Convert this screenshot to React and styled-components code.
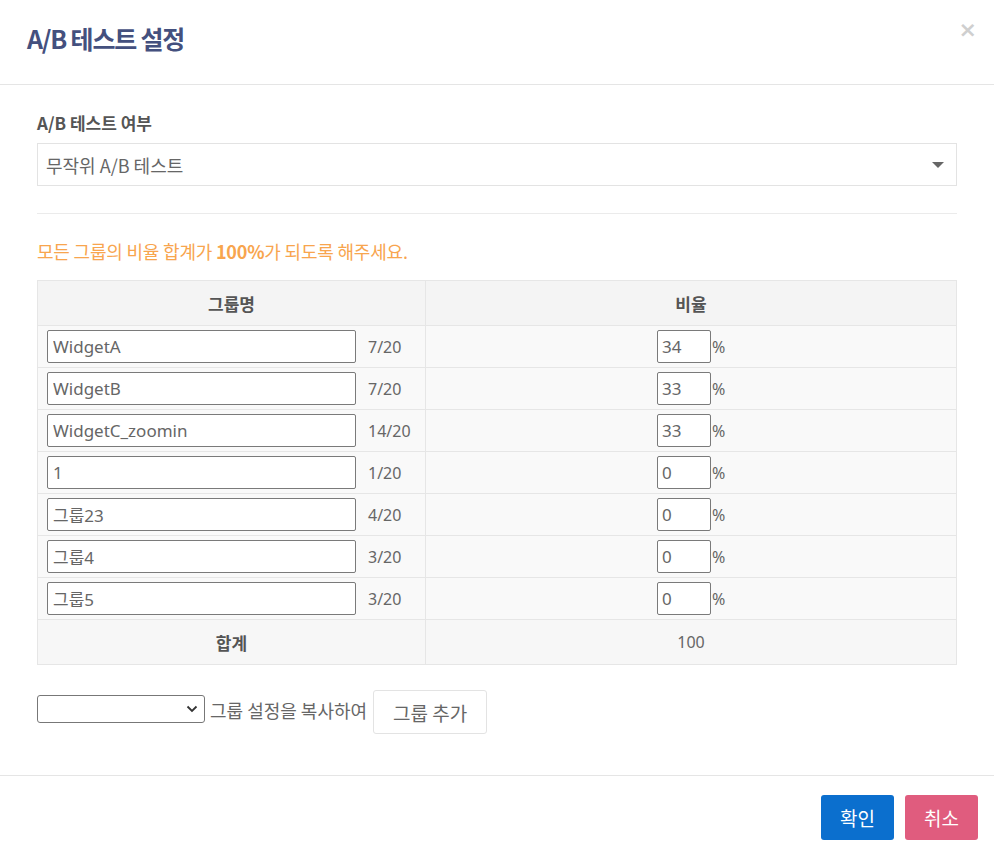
import React from 'react';
import styled, { createGlobalStyle } from 'styled-components';

const GlobalStyle = createGlobalStyle`
  html, body {
    margin: 0;
    padding: 0;
    background: #fff;
  }
  body {
    font-family: "Noto Sans", "Noto Sans CJK KR", sans-serif;
    color: #555;
  }
`;

const groups = [
  { name: 'WidgetA', ratio: 34 },
  { name: 'WidgetB', ratio: 33 },
  { name: 'WidgetC_zoomin', ratio: 33 },
  { name: '1', ratio: 0 },
  { name: '그룹23', ratio: 0 },
  { name: '그룹4', ratio: 0 },
  { name: '그룹5', ratio: 0 },
];

function App() {
  const total = groups.reduce((s, g) => s + g.ratio, 0);
  return (
    <Modal>
      <GlobalStyle />
      <Header>
        <Title>A/B 테스트 설정</Title>
        <Close>×</Close>
      </Header>
      <Body>
        <Label>A/B 테스트 여부</Label>
        <SelectBox>
          <span>무작위 A/B 테스트</span>
          <Caret />
        </SelectBox>
        <Divider />
        <Notice>
          모든 그룹의 비율 합계가 <b>100%</b>가 되도록 해주세요.
        </Notice>
        <Table>
          <thead>
            <tr>
              <Th style={{ width: 387 }}>그룹명</Th>
              <Th>비율</Th>
            </tr>
          </thead>
          <tbody>
            {groups.map((g) => (
              <tr key={g.name}>
                <Td>
                  <NameCell>
                    <NameInput defaultValue={g.name} />
                    <Counter>{g.name.length}/20</Counter>
                  </NameCell>
                </Td>
                <Td>
                  <RatioCell>
                    <RatioInput defaultValue={g.ratio} />
                    <Pct>%</Pct>
                  </RatioCell>
                </Td>
              </tr>
            ))}
            <tr>
              <SumTh>합계</SumTh>
              <SumTd>{total}</SumTd>
            </tr>
          </tbody>
        </Table>
        <CopyRow>
          <SmallSelect>
            <svg width="12" height="8" viewBox="0 0 12 8">
              <path d="M1.5 1.5 L6 6 L10.5 1.5" fill="none" stroke="#333" strokeWidth="1.8" />
            </svg>
          </SmallSelect>
          <CopyText>그룹 설정을 복사하여</CopyText>
          <GhostButton>그룹 추가</GhostButton>
        </CopyRow>
      </Body>
      <Footer>
        <Button $color="#0b6fce">확인</Button>
        <Button $color="#e05c7e">취소</Button>
      </Footer>
    </Modal>
  );
}

const Modal = styled.div`
  width: 994px;
  height: 857px;
  background: #fff;
  display: flex;
  flex-direction: column;
`;

const Header = styled.div`
  height: 85px;
  border-bottom: 1px solid #e5e5e5;
  display: flex;
  justify-content: space-between;
  align-items: flex-start;
  padding: 0 17px 0 27px;
  box-sizing: border-box;
`;

const Title = styled.h1`
  margin: 20px 0 0;
  font-family: "Noto Sans CJK KR", sans-serif;
  font-size: 25px;
  font-weight: 700;
  letter-spacing: -1.2px;
  color: #44507e;
`;

const Close = styled.span`
  margin-top: 17px;
  font-family: "DejaVu Sans", sans-serif;
  font-size: 22px;
  font-weight: 700;
  color: #cfcfcf;
`;

const Body = styled.div`
  padding: 25px 37px 0;
  flex: 1;
`;

const Label = styled.div`
  font-family: "Noto Sans CJK KR", sans-serif;
  font-size: 17px;
  font-weight: 700;
  color: #555;
  line-height: 26px;
`;

const SelectBox = styled.div`
  margin-top: 7px;
  height: 43px;
  box-sizing: border-box;
  border: 1px solid #e3e3e3;
  display: flex;
  align-items: center;
  justify-content: space-between;
  padding: 0 12px 0 8px;
  font-family: "Noto Sans CJK KR", sans-serif;
  font-size: 18px;
  color: #666;
`;

const Caret = styled.span`
  width: 0;
  height: 0;
  border-left: 6px solid transparent;
  border-right: 6px solid transparent;
  border-top: 6px solid #666;
`;

const Divider = styled.hr`
  margin: 27px 0 0;
  border: 0;
  border-top: 1px solid #ebebeb;
`;

const Notice = styled.p`
  margin: 21px 0 0;
  font-family: "Noto Sans CJK KR", sans-serif;
  font-size: 18px;
  line-height: 32px;
  color: #f8a54e;
  letter-spacing: -0.2px;

  b {
    font-weight: 700;
  }
`;

const Table = styled.table`
  margin-top: 13px;
  width: 920px;
  border-collapse: collapse;
  border: 1px solid #e6e6e6;
  font-family: "Noto Sans CJK KR", sans-serif;
  font-size: 17px;
`;

const Th = styled.th`
  height: 44px;
  padding: 0;
  background: #f4f4f4;
  border: 1px solid #e6e6e6;
  font-weight: 700;
  color: #555;
`;

const Td = styled.td`
  height: 41px;
  padding: 0;
  background: #f9f9f9;
  border: 1px solid #e6e6e6;
`;

const SumTh = styled(Th)`
  background: #f7f7f7;
`;

const SumTd = styled.td`
  height: 44px;
  padding: 0;
  background: #f7f7f7;
  border: 1px solid #e6e6e6;
  text-align: center;
  color: #666;
  font-family: "Noto Sans", sans-serif;
  font-size: 16px;
`;

const NameCell = styled.div`
  display: flex;
  align-items: center;
  padding-left: 9px;
`;

const fieldBase = `
  box-sizing: border-box;
  height: 33px;
  border: 1px solid #7a7a7a;
  border-radius: 2px;
  background: #fff;
  font-family: "Noto Sans", "Noto Sans CJK KR", sans-serif;
  font-size: 17px;
  color: #666;
  padding: 0 5px;
  outline: none;
`;

const NameInput = styled.input`
  ${fieldBase}
  width: 309px;
`;

const Counter = styled.span`
  margin-left: 12px;
  color: #666;
  font-family: "Noto Sans", sans-serif;
  font-size: 16px;
`;

const RatioCell = styled.div`
  display: flex;
  align-items: center;
  justify-content: center;
  padding-left: 1px;
`;

const RatioInput = styled.input`
  ${fieldBase}
  width: 54px;
  padding: 0 4px;
`;

const Pct = styled.span`
  margin-left: 1px;
  color: #666;
  font-family: "Noto Sans", sans-serif;
  font-size: 16px;
  width: 14px;
`;

const CopyRow = styled.div`
  margin-top: 25px;
  display: flex;
  align-items: center;
  gap: 5px;
`;

const SmallSelect = styled.div`
  width: 168px;
  height: 28px;
  margin-bottom: 6px;
  box-sizing: border-box;
  border: 1px solid #777;
  border-radius: 3px;
  display: flex;
  align-items: center;
  justify-content: flex-end;
  padding-right: 6px;
`;

const CopyText = styled.span`
  font-family: "Noto Sans CJK KR", sans-serif;
  font-size: 18px;
  color: #666;
  letter-spacing: 0;
  margin-bottom: 4px;
`;

const GhostButton = styled.button`
  height: 44px;
  width: 114px;
  margin-left: 1px;
  border: 1px solid #e3e3e3;
  border-radius: 3px;
  background: #fff;
  font-family: "Noto Sans CJK KR", sans-serif;
  font-size: 19px;
  color: #666;
`;

const Footer = styled.div`
  height: 82px;
  border-top: 1px solid #e5e5e5;
  display: flex;
  justify-content: flex-end;
  align-items: flex-start;
  gap: 11px;
  padding: 19px 16px 0 0;
  box-sizing: border-box;
`;

const Button = styled.button`
  width: 73px;
  height: 45px;
  border: 0;
  border-radius: 3px;
  background: ${(p) => p.$color};
  color: #fff;
  font-family: "Noto Sans CJK KR", sans-serif;
  font-size: 19px;
`;

export default App;
